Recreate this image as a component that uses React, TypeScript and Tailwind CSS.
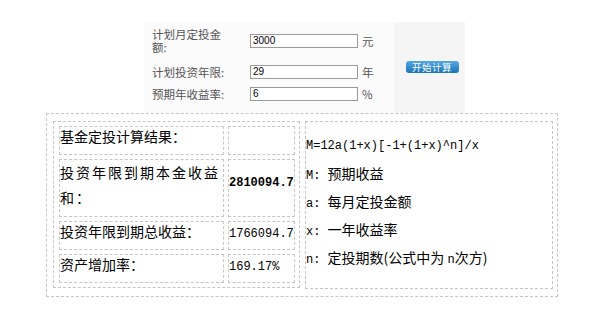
import React from "react";

const mono = "font-['Liberation_Mono',monospace] text-[12px] leading-none";

function FormRow({
  h,
  mt,
  label,
  value,
  unit,
}: {
  h: string;
  mt: string;
  label: string;
  value: string;
  unit: string;
}) {
  return (
    <div className={`flex items-center ${h} ${mt}`}>
      <div className="w-[98px] pr-[22px] leading-[13px]">{label}</div>
      <div className="w-[108px] h-[14px] border border-[#9a9a9a] bg-white pl-[2px] text-[10px] leading-[12px] text-black font-['Liberation_Sans',sans-serif]">
        {value}
      </div>
      <div className="ml-[4px] leading-[13px]">{unit}</div>
    </div>
  );
}

export default function App() {
  const cell = "border border-dashed border-[#c6c6c6] text-[14px] leading-[18px] text-black overflow-hidden";
  const line = "h-[28px] leading-[28px] whitespace-nowrap";
  return (
    <div className="w-[601px] h-[309px] bg-white pt-[22px] font-['Noto_Sans_CJK_SC',sans-serif]">
      {/* top form panel */}
      <div className="ml-[144px] w-[321px] h-[91px] flex">
        <div className="w-[250px] bg-[#fbfbfb] pl-[8px] pt-[5px] text-[11.5px] text-[#555]">
          <FormRow h="h-[28px]" mt="mt-0" label="计划月定投金额:" value="3000" unit="元" />
          <FormRow h="h-[22px]" mt="mt-[6px]" label="计划投资年限:" value="29" unit="年" />
          <FormRow h="h-[22px]" mt="mt-0" label="预期年收益率:" value="6" unit="%" />
        </div>
        <div className="w-[71px] bg-[#f5f5f5] flex items-center justify-center pl-[5px] pb-[1px]">
          <div className="w-[53px] h-[12px] rounded-[3px] bg-linear-to-b from-[#52a9e2] to-[#1a74b6] text-white text-[9.5px] leading-[12px] text-center tracking-[0.5px]">
            开始计算
          </div>
        </div>
      </div>

      {/* result box */}
      <div className="ml-[46px] w-[512px] h-[184px] border border-dashed border-[#c6c6c6] pl-[6px] pt-[7px] pr-[4px] flex items-start gap-[5px]">
        <div className="w-[247px] h-[167px] border border-dashed border-[#c6c6c6] pl-[5px] pr-[4px] pt-[4px] grid grid-cols-[165px_67px] grid-rows-[29px_58px_29px_29px] gap-x-[4px] gap-y-[4px]">
          <div className={cell}>基金定投计算结果：</div>
          <div className={cell}></div>
          <div className={`${cell} !leading-[25px] tracking-[2px]`}>投资年限到期本金收益和：</div>
          <div className={`${cell} pt-[11px]`}>
            <span className={`${mono} font-bold whitespace-nowrap`}>2810094.7</span>
          </div>
          <div className={cell}>投资年限到期总收益：</div>
          <div className={cell}>
            <span className={`${mono} whitespace-nowrap`}>1766094.7</span>
          </div>
          <div className={cell}>资产增加率：</div>
          <div className={cell}>
            <span className={`${mono} whitespace-nowrap`}>169.17%</span>
          </div>
        </div>

        <div className="w-[248px] h-[168px] border border-dashed border-[#c6c6c6] pt-[7px] text-[14px] text-black">
          <div className={`${line} mb-[2px]`}>
            <span className={mono}>M=12a(1+x)[-1+(1+x)^n]/x</span>
          </div>
          <div className={line}>
            <span className={mono}>M: </span>预期收益
          </div>
          <div className={line}>
            <span className={mono}>a: </span>每月定投金额
          </div>
          <div className={line}>
            <span className={mono}>x: </span>一年收益率
          </div>
          <div className={line}>
            <span className={mono}>n: </span>定投期数(公式中为 <span className={mono}>n</span>次方)
          </div>
        </div>
      </div>
    </div>
  );
}
